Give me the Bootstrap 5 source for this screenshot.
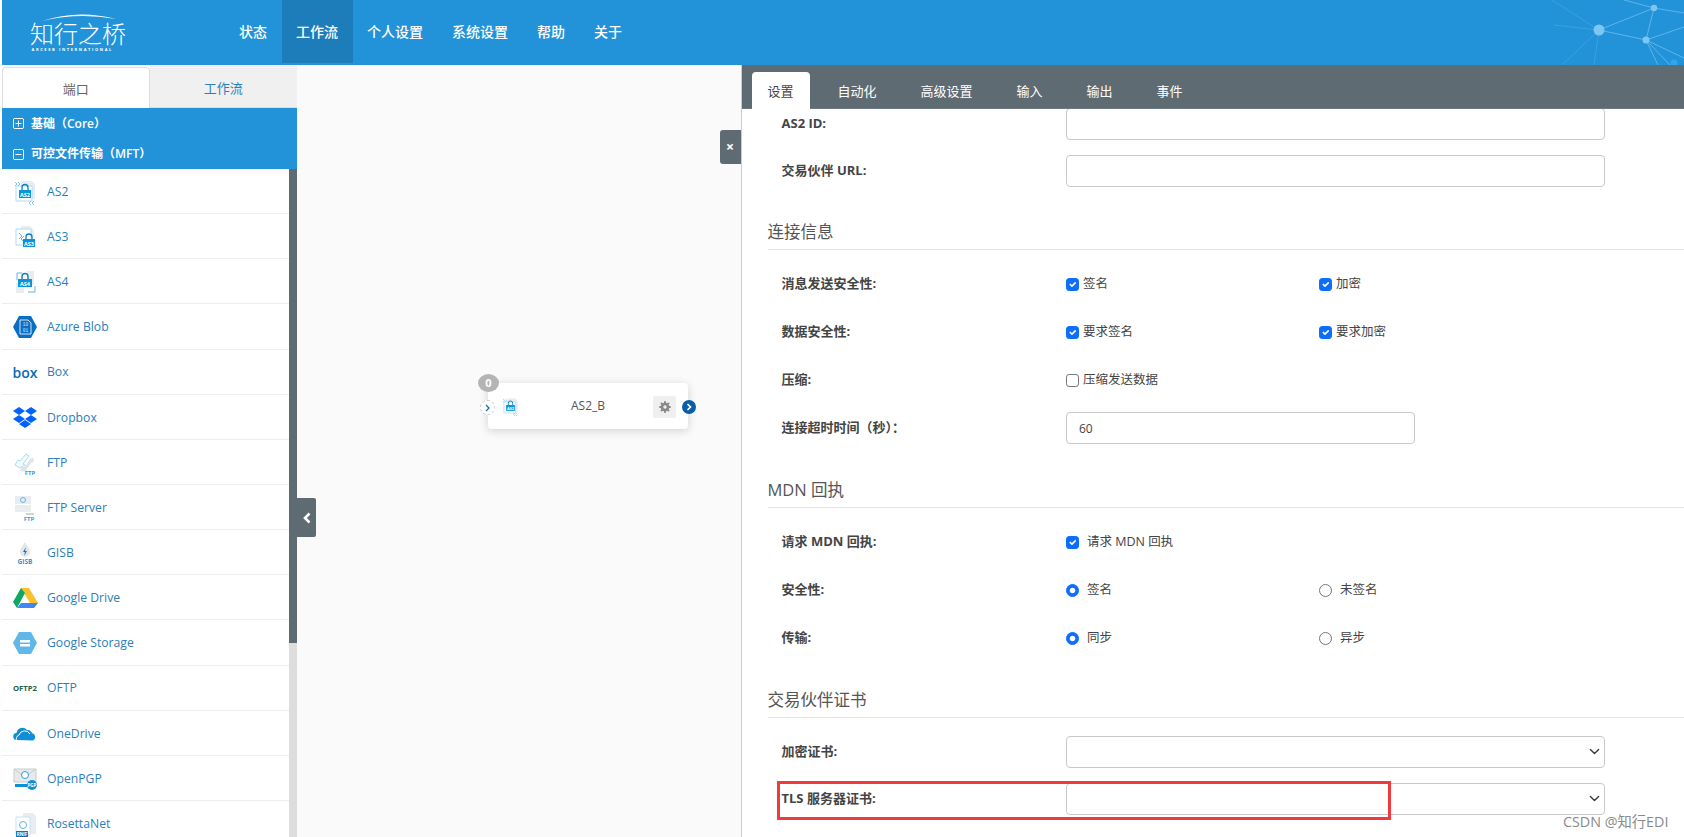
<!DOCTYPE html>
<html lang="zh">
<head>
<meta charset="utf-8">
<title>知行之桥</title>
<link href="https://cdn.jsdelivr.net/npm/bootstrap@5.3.0/dist/css/bootstrap.min.css" rel="stylesheet">
<style>
html,body{height:837px;overflow:hidden;background:#fff}
body{font-family:"Open Sans","Noto Sans CJK SC",sans-serif;font-size:13px;color:#444;position:relative;padding-left:2px}
.topbar{height:65px;background:#2393d9;padding:0;position:relative;align-items:flex-start;flex-wrap:nowrap;justify-content:flex-start}
.brand-box{width:222.5px;height:65px;position:relative;color:#fff;flex:none}
.brand-arc{position:absolute;left:38px;top:12px}
.brand-cn{position:absolute;left:28px;top:17px;font:300 24px/32px "Noto Sans CJK SC",sans-serif;letter-spacing:0;white-space:nowrap}
.brand-en{position:absolute;left:29.5px;top:47px;font:700 4px/6px "Open Sans",sans-serif;letter-spacing:1.62px;white-space:nowrap}
.topbar .navbar-nav .nav-link{color:#fff;font-size:14px;font-weight:500;height:63px;line-height:63px;padding:0 14.5px}
.topbar .navbar-nav .nav-link.active{background:#1d7dba;color:#fff}
.net-art{position:absolute;right:0;top:0}
.whole{height:772px;margin-top:1px}
.left-pane{width:295px;flex:none;display:flex;flex-direction:column;height:772px;overflow:hidden}
.left-tabs{height:42px;flex:none}
.left-tab{flex:1 1 50%;text-align:center;line-height:40px;font-size:13px;text-decoration:none;background:#f0f0f0;color:#2a80b9;border-bottom:1px solid #ddd;padding-top:2px}
.left-tab.on{background:#fff;color:#666;border:1px solid #ddd;border-bottom:0;border-radius:4px 4px 0 0;margin-top:1px;padding-top:1px}
.cat-head{background:#2393d9;color:#fff;font-size:12px;font-weight:600;height:30px;line-height:30px;padding-left:11px;display:flex;align-items:center;gap:7px;flex:none}
.cat-head.first{height:31px}
.port-wrap{flex:1;min-height:0;overflow:hidden}
.port-list{width:287px;flex:none}
.port-list .list-group-item{height:45.15px;padding:2px 0 0 10px;display:flex;align-items:center;gap:9px;font-size:12.2px;color:#2a80b9;border-color:#eee;flex:none;white-space:nowrap}
.port-ic{width:26px;height:26px;flex:none}
.scroll-track{width:8px;flex:none;background:#ddd}
.scroll-thumb{height:474px;background:#5f6b73}
.canvas-pane{width:443.5px;flex:none;background:#fafafa;position:relative;height:772px}
.fold-btn{position:absolute;left:0;top:432px;width:19px;height:39px;background:#5f6b73;display:flex;align-items:center;justify-content:center;border-radius:0 2px 2px 0}
.shut-btn{position:absolute;right:0;top:64px;width:21px;height:34px;background:#5f6b73;color:#fff;border-radius:3px 0 0 3px;font-size:14px;font-weight:700;display:flex;align-items:center;justify-content:center;line-height:1}
.flow-node{position:absolute;left:191px;top:317px;width:200px;height:46px;background:#fff;border-radius:4px;box-shadow:0 2px 10px rgba(0,0,0,.16);display:flex;align-items:center;font-size:12px;color:#555}
.node-count{position:absolute;left:-10px;top:-9px;width:21px;height:18px;border-radius:50%;background:#b4b4b4;color:#fff;font-weight:700;font-size:11px;text-align:center;line-height:18px}
.node-in{position:absolute;left:-8px;top:17px;width:15px;height:15px;border-radius:50%;border:1px dashed #ccc;background:#fff;display:flex;align-items:center;justify-content:center}
.node-out{position:absolute;right:-8px;top:17px;width:14px;height:14px;border-radius:50%;background:#0a5ea8;display:flex;align-items:center;justify-content:center}
.node-ic{position:absolute;left:13px;top:14px}
.node-name{flex:1;text-align:center}
.node-gear{position:absolute;left:165px;top:13px;width:23px;height:22px;background:#efefef;border-radius:2px;display:flex;align-items:center;justify-content:center}
.set-pane{flex:1;min-width:0;border-left:1px solid #ccc;display:flex;flex-direction:column;height:772px;overflow:hidden;margin-top:-1px}
.set-tabs{height:44px;flex:none;background:#5f6b73;padding:7px 0 0 10px;gap:12px;border:0;flex-wrap:nowrap;border-bottom:1px solid #6e7a82}
.set-tabs .nav-link{color:#fff;font-size:13px;padding:0 16px;height:37px;line-height:38px;border:0;border-radius:4px 4px 0 0;margin:0}
.set-tabs .nav-link.active{background:#fff;color:#444}
.form-clip{flex:1;overflow:hidden;padding-left:26px}
.form-flow{margin-top:-9px}
.f-row{display:flex;align-items:center;padding-left:14px}
.f-row.tall{height:47px}
.f-row.wide{height:48px}
.f-label{width:284.5px;flex:none;font-weight:700;color:#444;font-size:13px}
.f-ctrl{width:539px;flex:none}
.f-ctrl.short{width:349px}
.f-ctrl .form-control,.f-ctrl .form-select{height:32px;min-height:32px;font-size:12px;color:#444;border:1px solid #c9c9c9;border-radius:4px;padding:0 12px;box-shadow:none}
.f-ctrl .form-select{background-position:right 3px center;background-size:13px 11px}
.f-opt{width:253px;flex:none;display:flex;align-items:center;gap:4px;color:#444;font-size:12.5px;margin:0;padding:0}
.f-opt .form-check-input{margin:0;width:13px;height:13px;flex:none;float:none}
.f-opt .form-check-input:not(:checked){border-color:#777}
.f-opt.gap8{gap:8px}
.f-title{font-size:16.5px;font-weight:400;color:#555;line-height:24px;margin:26px 0 10px;padding-bottom:5px;border-bottom:1px solid #e5e5e5;font-family:"Open Sans","Noto Sans CJK SC",sans-serif}
.red-mark{position:absolute;left:776.5px;top:781px;width:614px;height:39px;border:3px solid #f03a3e;pointer-events:none}
.csdn-mark{position:absolute;left:1563px;top:812px;font-size:14.3px;line-height:20px;color:#8a8a8a;white-space:nowrap}
</style>
</head>
<body>
<svg width="0" height="0" class="d-block" style="position:absolute">
  <defs>
    <symbol id="as2" viewBox="0 0 26 26">
      <path d="M9 2h11l3 3v15H9z" fill="#e9edf0"/>
      <path d="M4 7h16v15H4z" fill="#fff" stroke="#a8dcf5"/>
      <path d="M3 3l2 2-2 2M6 3l2 2-2 2M19 22l-2 2 2 2M22 22l-2 2 2 2" fill="none" stroke="#5db7e6" stroke-width=".8"/>
      <path d="M10 11V8.500a3 3 0 0 1 6 0V11" fill="none" stroke="#0b7fc4" stroke-width="1.300"/>
      <rect x="7" y="11" width="12" height="8" fill="#0a95d8"/>
      <text x="13" y="17.500" text-anchor="middle" font-size="5.500" font-weight="700" fill="#fff" font-family="Open Sans">AS2</text>
    </symbol>
  </defs>
</svg>

<nav class="navbar navbar-expand topbar">
  <div class="brand-box">
    <svg class="brand-arc" width="80" height="10" viewBox="0 0 80 10"><path d="M2 9Q38 -3 76 7Q38 0 2 9z" fill="#fff"/></svg>
    <div class="brand-cn">知行之桥</div>
    <div class="brand-en">ARCESB INTERNATIONAL</div>
  </div>
  <ul class="navbar-nav">
    <li class="nav-item"><a class="nav-link" href="#">状态</a></li>
    <li class="nav-item"><a class="nav-link active" href="#">工作流</a></li>
    <li class="nav-item"><a class="nav-link" href="#">个人设置</a></li>
    <li class="nav-item"><a class="nav-link" href="#">系统设置</a></li>
    <li class="nav-item"><a class="nav-link" href="#">帮助</a></li>
    <li class="nav-item"><a class="nav-link" href="#">关于</a></li>
  </ul>
  <svg class="net-art" width="240" height="65" viewBox="0 0 240 65">
    <g stroke="#8fd0f5" fill="none">
      <path d="M155 30L210 8M155 30L202 40M210 8L202 40M202 40L240 27M202 40L240 58M202 40L214 65M202 40L226 65M210 8L240 13M180 0L210 8" stroke-opacity=".55"/>
      <path d="M155 30L150 65M155 30L118 65M155 30L100 -5M155 30L110 25" stroke-opacity=".22"/>
    </g>
    <circle cx="155" cy="30" r="5.500" fill="#7cc6f1"/>
    <circle cx="210" cy="8" r="3.200" fill="#7cc6f1"/>
    <circle cx="202" cy="40" r="3.500" fill="#7cc6f1"/>
    <circle cx="230" cy="63" r="3.500" fill="#2fa6ee"/>
  </svg>
</nav>

<div class="d-flex whole">
  <aside class="left-pane">
    <div class="d-flex left-tabs">
      <a class="left-tab on" href="#">端口</a>
      <a class="left-tab" href="#">工作流</a>
    </div>
    <div class="cat-head first"><svg width="11" height="11" viewBox="0 0 11 11"><path d="M1 .5h9l.5.5v9l-.5.5H1l-.5-.5V1zM5.500 2.500v6M2.500 5.500h6" fill="none" stroke="#fff"/></svg>基础（Core）</div>
    <div class="cat-head"><svg width="11" height="11" viewBox="0 0 11 11"><path d="M1 .5h9l.5.5v9l-.5.5H1l-.5-.5V1zM2.500 5.500h6" fill="none" stroke="#fff"/></svg>可控文件传输（MFT）</div>
    <div class="d-flex port-wrap">
      <div class="list-group list-group-flush port-list rounded-0">
        <a class="list-group-item" href="#"><svg class="port-ic"><use href="#as2"/></svg>AS2</a>
        <a class="list-group-item" href="#"><svg class="port-ic" viewBox="0 0 26 26"><path d="M9 2h9l4 4v8H9z" fill="#e9edf0"/><path d="M4 5h15v16H4z" fill="#fff" stroke="#a8dcf5"/><path d="M7 9l3 3-3 3M12 12l-3 3 3 3" fill="none" stroke="#5db7e6"/><rect x="11" y="15" width="12" height="8" fill="#0a95d8"/><path d="M14 15v-2a3 3 0 0 1 6 0v2" fill="none" stroke="#0b7fc4" stroke-width="1.300"/><text x="17" y="21.500" text-anchor="middle" font-size="5.500" font-weight="700" fill="#fff" font-family="Open Sans">AS3</text></svg>AS3</a>
        <a class="list-group-item" href="#"><svg class="port-ic" viewBox="0 0 26 26"><path d="M15 2h7v14h-7zM4 14h8v10H4z" fill="#e9edf0"/><path d="M10 4H5v7M16 23h7v-6" fill="none" stroke="#5db7e6"/><path d="M10 10V7.500a3 3 0 0 1 6 0V10" fill="none" stroke="#0b7fc4" stroke-width="1.400"/><rect x="6" y="10" width="14" height="8" fill="#0a95d8"/><text x="13" y="16.500" text-anchor="middle" font-size="5.500" font-weight="700" fill="#fff" font-family="Open Sans">AS4</text></svg>AS4</a>
        <a class="list-group-item" href="#"><svg class="port-ic" viewBox="0 0 26 26"><path d="M7 2h12l6 11-6 11H7L1 13z" fill="#0a6fc4"/><path d="M8 6h8l3 3v11H8z" fill="none" stroke="#cfe4f5"/><text x="13.500" y="12" text-anchor="middle" font-size="4.500" fill="#cfe4f5" font-family="Liberation Mono">10</text><text x="13.500" y="18" text-anchor="middle" font-size="4.500" fill="#cfe4f5" font-family="Liberation Mono">01</text></svg>Azure Blob</a>
        <a class="list-group-item" href="#"><svg class="port-ic" viewBox="0 0 26 26"><text x="0.500" y="18" font-size="15" font-weight="600" fill="#0b6ab5" font-family="Open Sans" textLength="25" lengthAdjust="spacingAndGlyphs">box</text></svg>Box</a>
        <a class="list-group-item" href="#"><svg class="port-ic" viewBox="0 0 26 26"><path d="M7 2l6 4-6 4-6-4zM19 2l6 4-6 4-6-4zM7 10l6 4-6 4-6-4zM19 10l6 4-6 4-6-4zM13 15l6 4-6 4-6-4z" fill="#0061fe"/></svg>Dropbox</a>
        <a class="list-group-item" href="#"><svg class="port-ic" viewBox="0 0 26 26"><path d="M3 15l3-5 2 1 6-7 3 2-6 8 2 1-5 3z" fill="#f4fbff" stroke="#a8dcf5"/><path d="M8 21l2-5 2 1 6-7-1-1 5-1-1 5-1-1-6 8 1 2z" fill="#dfe4e8"/><text x="18" y="24.500" text-anchor="middle" font-size="6" font-weight="700" fill="#2a9ede" font-family="Open Sans">FTP</text></svg>FTP</a>
        <a class="list-group-item" href="#"><svg class="port-ic" viewBox="0 0 26 26"><rect x="3" y="1" width="16" height="8" fill="#e9edf0"/><rect x="3" y="10" width="16" height="7" fill="#e9edf0"/><circle cx="11" cy="5" r="2.500" fill="none" stroke="#5db7e6"/><path d="M14 19h8" stroke="#9aa" fill="none"/><text x="17" y="25.500" text-anchor="middle" font-size="6" font-weight="700" fill="#2a9ede" font-family="Open Sans">FTP</text></svg>FTP Server</a>
        <a class="list-group-item" href="#"><svg class="port-ic" viewBox="0 0 26 26"><path d="M13 2c3 5 5 7 5 10a5 5 0 0 1-10 0c0-3 2-5 5-10z" fill="#e3e7ea"/><path d="M14 7l-3 5h2l-1 4 3-5h-2z" fill="#1a6fae"/><text x="13" y="24" text-anchor="middle" font-size="6.500" font-weight="700" fill="#1e9bdc" font-family="Open Sans">GISB</text></svg>GISB</a>
        <a class="list-group-item" href="#"><svg class="port-ic" viewBox="0 0 26 26"><path d="M9 3h8l9 15h-8z" fill="#fbc02d"/><path d="M9 3L1 17l4 6 8-15z" fill="#0da960"/><path d="M5 23h17l4-5H9z" fill="#4285f4"/></svg>Google Drive</a>
        <a class="list-group-item" href="#"><svg class="port-ic" viewBox="0 0 26 26"><path d="M7 2h12l6 11-6 11H7L1 13z" fill="#5fb8e8"/><rect x="8" y="10" width="10" height="2.500" fill="#fff"/><rect x="8" y="14" width="10" height="2.500" fill="#fff"/></svg>Google Storage</a>
        <a class="list-group-item" href="#"><svg class="port-ic" viewBox="0 0 26 26"><text x="1" y="15" font-size="7.500" font-weight="700" fill="#1f5c46" font-family="Open Sans" textLength="24" lengthAdjust="spacingAndGlyphs">OFTP2</text></svg>OFTP</a>
        <a class="list-group-item" href="#"><svg class="port-ic" viewBox="0 0 26 26"><path d="M5 19a3.500 3.500 0 0 1-.5-7A6 6 0 0 1 15 9a5 5 0 0 1 5 3 4 4 0 0 1 1 7.500z" fill="#0f8fd6"/><path d="M5 20a4 4 0 0 1 2-6 6 6 0 0 1 11-1" fill="none" stroke="#fff" stroke-width="1"/></svg>OneDrive</a>
        <a class="list-group-item" href="#"><svg class="port-ic" viewBox="0 0 26 26"><path d="M2 3h22v13H2z" fill="#e6eaed" stroke="#c6ccd0"/><path d="M2 3l11 8 11-8" fill="none" stroke="#c6ccd0"/><circle cx="13" cy="9" r="3.500" fill="#fff" stroke="#2a9ede"/><path d="M3 18h13v3H3z" fill="#0f8fd6"/><circle cx="20" cy="19" r="5" fill="#0f8fd6"/><text x="20" y="21" text-anchor="middle" font-size="4.500" font-weight="700" fill="#fff" font-family="Open Sans">PGP</text></svg>OpenPGP</a>
        <a class="list-group-item" href="#"><svg class="port-ic" viewBox="0 0 26 26"><path d="M11 1h10l3 3v18H11z" fill="#e9edf0"/><path d="M4 5h14v18H4z" fill="#fff" stroke="#bfe3f7"/><circle cx="11" cy="13" r="3.500" fill="none" stroke="#5db7e6"/><rect x="4" y="19" width="12" height="6" fill="#0a78bd"/><text x="10" y="24" text-anchor="middle" font-size="4.500" font-weight="700" fill="#fff" font-family="Open Sans">RNIF</text></svg>RosettaNet</a>
      </div>
      <div class="scroll-track"><div class="scroll-thumb"></div></div>
    </div>
  </aside>

  <section class="canvas-pane">
    <div class="fold-btn"><svg width="10" height="12" viewBox="0 0 10 12"><path d="M7.500 1.500L3 6l4.500 4.500" fill="none" stroke="#fff" stroke-width="2.600"/></svg></div>
    <div class="shut-btn">×</div>
    <div class="flow-node">
      <span class="node-count">0</span>
      <span class="node-in"><svg width="7" height="8" viewBox="0 0 7 8"><path d="M2 1l3 3-3 3" fill="none" stroke="#1b6cb0" stroke-width="1.300"/></svg></span>
      <svg class="node-ic" width="19" height="19"><use href="#as2"/></svg>
      <span class="node-name">AS2_B</span>
      <span class="node-gear"><svg width="12" height="12" viewBox="0 0 12 12"><circle cx="6" cy="6" r="3" fill="none" stroke="#888" stroke-width="2.600"/><path d="M6 .3v2M6 9.700v2M.3 6h2M9.700 6h2M2 2l1.400 1.400M8.600 8.600L10 10M2 10l1.400-1.400M8.600 3.400L10 2" stroke="#888" stroke-width="2"/></svg></span>
      <span class="node-out"><svg width="8" height="8" viewBox="0 0 8 8"><path d="M2.500 1l3 3-3 3" fill="none" stroke="#fff" stroke-width="1.700"/></svg></span>
    </div>
  </section>

  <section class="set-pane">
    <ul class="nav nav-tabs set-tabs">
      <li class="nav-item"><a class="nav-link active" href="#">设置</a></li>
      <li class="nav-item"><a class="nav-link" href="#">自动化</a></li>
      <li class="nav-item"><a class="nav-link" href="#">高级设置</a></li>
      <li class="nav-item"><a class="nav-link" href="#">输入</a></li>
      <li class="nav-item"><a class="nav-link" href="#">输出</a></li>
      <li class="nav-item"><a class="nav-link" href="#">事件</a></li>
    </ul>
    <div class="form-clip">
      <div class="form-flow">
        <div class="f-row tall"><div class="f-label">AS2 ID:</div><div class="f-ctrl"><input class="form-control" type="text"></div></div>
        <div class="f-row tall"><div class="f-label">交易伙伴 URL:</div><div class="f-ctrl"><input class="form-control" type="text"></div></div>

        <h5 class="f-title">连接信息</h5>
        <div class="f-row wide"><div class="f-label">消息发送安全性:</div>
          <label class="f-opt"><input class="form-check-input" type="checkbox" checked>签名</label>
          <label class="f-opt"><input class="form-check-input" type="checkbox" checked>加密</label></div>
        <div class="f-row wide"><div class="f-label">数据安全性:</div>
          <label class="f-opt"><input class="form-check-input" type="checkbox" checked>要求签名</label>
          <label class="f-opt"><input class="form-check-input" type="checkbox" checked>要求加密</label></div>
        <div class="f-row wide"><div class="f-label">压缩:</div>
          <label class="f-opt"><input class="form-check-input" type="checkbox">压缩发送数据</label></div>
        <div class="f-row wide"><div class="f-label">连接超时时间（秒）：</div>
          <div class="f-ctrl short"><input class="form-control" type="text" value="60"></div></div>

        <h5 class="f-title">MDN 回执</h5>
        <div class="f-row wide"><div class="f-label">请求 MDN 回执:</div>
          <label class="f-opt gap8"><input class="form-check-input" type="checkbox" checked>请求 MDN 回执</label></div>
        <div class="f-row wide"><div class="f-label">安全性:</div>
          <label class="f-opt gap8"><input class="form-check-input" type="radio" name="sec" checked>签名</label>
          <label class="f-opt gap8"><input class="form-check-input" type="radio" name="sec">未签名</label></div>
        <div class="f-row wide"><div class="f-label">传输:</div>
          <label class="f-opt gap8"><input class="form-check-input" type="radio" name="trn" checked>同步</label>
          <label class="f-opt gap8"><input class="form-check-input" type="radio" name="trn">异步</label></div>

        <h5 class="f-title">交易伙伴证书</h5>
        <div class="f-row tall"><div class="f-label">加密证书:</div><div class="f-ctrl"><select class="form-select"><option></option></select></div></div>
        <div class="f-row tall"><div class="f-label">TLS 服务器证书:</div><div class="f-ctrl"><select class="form-select"><option></option></select></div></div>
      </div>
    </div>
  </section>
</div>

<div class="red-mark"></div>
<div class="csdn-mark">CSDN @知行EDI</div>
</body>
</html>
